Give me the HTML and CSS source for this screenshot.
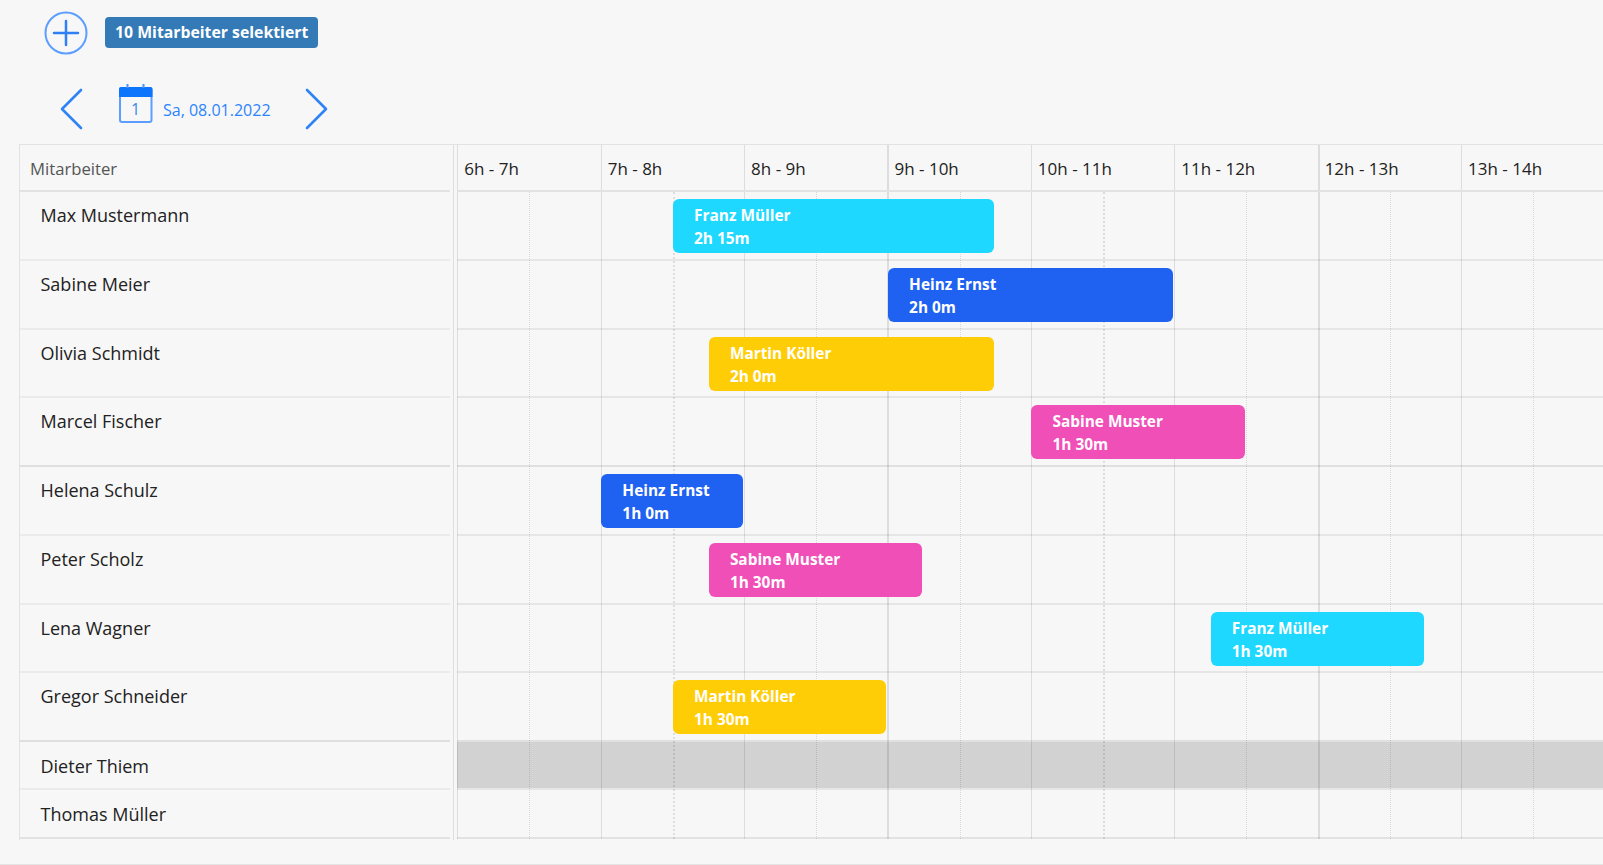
FILE: index.html
```html
<!DOCTYPE html>
<html lang="de">
<head>
  <meta charset="UTF-8" />
  <title>Einsatzplan</title>
  <link rel="stylesheet" href="styles.css">
</head>
<body>

<div class="toolbar">
  <svg class="icon-add" width="44" height="44" viewBox="0 0 44 44">
    <circle cx="22" cy="22" r="20.5" />
    <path d="M22 10V34M10 22H34" />
  </svg>
  <span class="badge">10 Mitarbeiter selektiert</span>
</div>

<div class="date-nav">
  <svg class="icon-chevron" width="24" height="42" viewBox="0 0 24 42">
    <path d="M22 2L3 21L22 40" />
  </svg>
  <svg class="icon-calendar" width="35" height="40" viewBox="0 0 35 40">
    <rect class="cal-frame" x="2" y="4" width="31.500" height="34" rx="2" />
    <path class="cal-head" d="M1 5a2 2 0 0 1 2-2H32.500a2 2 0 0 1 2 2V13H1Z" />
    <path class="cal-head cal-ring" d="M9.500 0V4M25.500 0V4" />
    <text x="17.500" y="30.500" text-anchor="middle">1</text>
  </svg>
  <span class="date-label">Sa, 08.01.2022</span>
  <svg class="icon-chevron" width="24" height="42" viewBox="0 0 24 42">
    <path d="M2 2L21 21L2 40" />
  </svg>
</div>

<div class="planner">
  <div class="names">
    <div class="names-head">Mitarbeiter</div>
    <div class="name-row">Max Mustermann</div>
    <div class="name-row">Sabine Meier</div>
    <div class="name-row">Olivia Schmidt</div>
    <div class="name-row group-end">Marcel Fischer</div>
    <div class="name-row">Helena Schulz</div>
    <div class="name-row">Peter Scholz</div>
    <div class="name-row">Lena Wagner</div>
    <div class="name-row group-end">Gregor Schneider</div>
    <div class="name-row short">Dieter Thiem</div>
    <div class="name-row short last">Thomas Müller</div>
  </div>

  <div class="divider"></div>

  <div class="timeline">
    <div class="time-head">
      <div class="hour">6h - 7h</div>
      <div class="hour">7h - 8h</div>
      <div class="hour">8h - 9h</div>
      <div class="hour major">9h - 10h</div>
      <div class="hour">10h - 11h</div>
      <div class="hour">11h - 12h</div>
      <div class="hour major">12h - 13h</div>
      <div class="hour">13h - 14h</div>
    </div>

    <div class="time-body">
      <!-- grid lines sit over the row backgrounds, under the bars -->
      <div class="grid-lines">
        <div class="hour"></div>
        <div class="hour strong-half"></div>
        <div class="hour"></div>
        <div class="hour major"></div>
        <div class="hour strong-half"></div>
        <div class="hour"></div>
        <div class="hour major"></div>
        <div class="hour"></div>
      </div>

      <div class="track">
        <div class="bar cyan" style="grid-column: 7 / span 9"><b>Franz Müller</b><b>2h 15m</b></div>
      </div>
      <div class="track">
        <div class="bar blue" style="grid-column: 13 / span 8"><b>Heinz Ernst</b><b>2h 0m</b></div>
      </div>
      <div class="track">
        <div class="bar yellow" style="grid-column: 8 / span 8"><b>Martin Köller</b><b>2h 0m</b></div>
      </div>
      <div class="track group-end">
        <div class="bar pink" style="grid-column: 17 / span 6"><b>Sabine Muster</b><b>1h 30m</b></div>
      </div>
      <div class="track">
        <div class="bar blue" style="grid-column: 5 / span 4"><b>Heinz Ernst</b><b>1h 0m</b></div>
      </div>
      <div class="track">
        <div class="bar pink" style="grid-column: 8 / span 6"><b>Sabine Muster</b><b>1h 30m</b></div>
      </div>
      <div class="track">
        <div class="bar cyan" style="grid-column: 22 / span 6"><b>Franz Müller</b><b>1h 30m</b></div>
      </div>
      <div class="track group-end">
        <div class="bar yellow" style="grid-column: 7 / span 6"><b>Martin Köller</b><b>1h 30m</b></div>
      </div>
      <div class="track short off"></div>
      <div class="track short last"></div>
    </div>
  </div>
</div>

</body>
</html>
```

FILE: styles.css
```css
* {
  box-sizing: border-box;
}
body {
  margin: 0;
  height: 865px;
  overflow: hidden;
  font-family: 'Open Sans', sans-serif;
  background: #f7f7f7;
  border-bottom: 1px solid #e4e4e4;
}
.toolbar {
  display: flex;
  align-items: center;
  gap: 17px;
  height: 44px;
  margin-top: 11px;
  padding-left: 44px;
}
.icon-add circle {
  fill: none;
  stroke: #5c9eff;
  stroke-width: 2;
}
.icon-add path {
  fill: none;
  stroke: #2f80f5;
  stroke-width: 2.5;
  stroke-linecap: round;
}
.badge {
  margin-bottom: 2px;
  padding: 0 10px;
  height: 31px;
  line-height: 30px;
  background: #337ab7;
  color: white;
  border-radius: 4px;
  font-size: 15.8px;
  font-weight: 700;
}
.date-nav {
  display: flex;
  align-items: flex-start;
  height: 89px;
  padding: 29px 0 0 59px;
  color: #2b84ff;
}
.icon-chevron {
  margin-top: 4px;
}
.icon-chevron path {
  fill: none;
  stroke: #2e84f5;
  stroke-width: 2.6;
  stroke-linecap: round;
  stroke-linejoin: round;
}
.icon-calendar {
  margin-left: 35px;
}
.icon-calendar text {
  font-family: 'Open Sans', sans-serif;
  font-size: 16px;
  fill: #3c86e8;
}
.cal-frame {
  fill: none;
  stroke: #5c9eff;
  stroke-width: 2;
}
.cal-head {
  fill: #0d75fb;
}
.cal-ring {
  fill: none;
  stroke: #4f95f8;
  stroke-width: 2;
}
.date-label {
  margin: 15px 34px 0 10px;
  font-size: 16px;
  line-height: 22px;
}
.planner {
  display: flex;
  margin-left: 19px;
  overflow: hidden;
  border-top: 1px solid #e2e2e2;
  height: 696px;
}
.names {
  flex: 0 0 431px;
  border-left: 1px solid #e2e2e2;
  color: #222;
}
.names-head {
  height: 47px;
  padding: 12px 0 0 10px;
  font-size: 16.7px;
  line-height: 24px;
  color: #555;
  border-bottom: 2px solid #e2e2e2;
}
.name-row {
  height: 68.75px;
  padding: 10px 0 0 20.5px;
  font-size: 18px;
  line-height: 26px;
  border-bottom: 2px solid #ebebeb;
}
.name-row.group-end {
  border-bottom-color: #dfdfdf;
}
.name-row.short, .track.short {
  height: 48px;
}
.name-row.short {
  padding-top: 11px;
}
.name-row.last, .track.last {
  height: 49px;
  border-bottom-color: #e2e2e2;
}
.divider {
  flex: 0 0 1px;
  margin: 0 3.3px 0 3px;
  background: #dedede;
}
.timeline {
  flex: 1;
  min-width: 0;
  overflow: hidden;
}
.time-head {
  display: flex;
  height: 47px;
  border-bottom: 2px solid #e2e2e2;
}
.hour {
  flex: 0 0 143.4px;
  border-left: 1px solid #dddddd;
}
.hour.major {
  border-left-width: 2px;
}
.time-head .hour {
  padding: 12px 0 0 6px;
  font-size: 17px;
  line-height: 24px;
  color: #222;
}
.time-head .hour.major {
  padding-left: 5px;
}
.time-body {
  position: relative;
}
.grid-lines {
  position: absolute;
  top: 0;
  bottom: 0;
  left: 0;
  display: flex;
  z-index: 1;
}
.grid-lines .hour {
  position: relative;
  border-left-color: rgba(0, 0, 0, 0.1);
}
.grid-lines .hour::after {
  content: "";
  position: absolute;
  top: 0;
  bottom: 0;
  left: 50%;
  border-left: 1px dotted rgba(0, 0, 0, 0.12);
}
.grid-lines .strong-half::after {
  border-left: 2px dotted rgba(0, 0, 0, 0.1);
}
.track {
  display: grid;
  grid-template-columns: repeat(32, 35.85px);
  align-content: start;
  height: 68.75px;
  padding-top: 7px;
  border-bottom: 2px solid #e6e6e6;
}
.track.group-end {
  border-bottom-color: #e0e0e0;
}
.track.off {
  background: #d2d2d2;
}
.bar {
  position: relative;
  z-index: 2;
  display: flex;
  flex-direction: column;
  height: 54px;
  margin: 0 1.2px 0 0.7px;
  padding: 5px 0 0 21px;
  border-radius: 6px;
  color: white;
  font-size: 15.4px;
  line-height: 23px;
}
.bar b {
  font-weight: 700;
}
.cyan {
  background: #1ed8ff;
}
.blue {
  background: #1f62f2;
}
.yellow {
  background: #ffcd05;
}
.pink {
  background: #f04fb7;
}
```
